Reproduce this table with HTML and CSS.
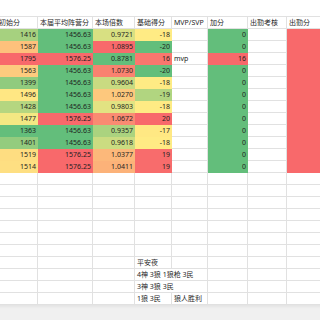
FILE: index.html
```html
<!DOCTYPE html>
<html lang="zh-CN">
<head>
<meta charset="utf-8">
<link rel="stylesheet" href="styles.css">
</head>
<body>
<div class="sheet">
  <div class="top"></div>
  <div class="row head">
    <div class="c">初始分</div><div class="c">本届平均阵营分</div><div class="c">本场倍数</div><div class="c">基础得分</div><div class="c">MVP/SVP</div><div class="c">加分</div><div class="c">出勤考核</div><div class="c">出勤分</div>
  </div>
  <div class="row">
    <div class="c f n" style="background:rgb(166,209,127)">1416</div><div class="c f n g">1456.63</div><div class="c f n" style="background:rgb(216,224,130)">0.9721</div><div class="c f n y">-18</div><div class="c"></div><div class="c f n g">0</div><div class="c"></div><div class="c f r"></div>
  </div>
  <div class="row">
    <div class="c f n" style="background:rgb(253,193,124)">1587</div><div class="c f n g">1456.63</div><div class="c f n r">1.0895</div><div class="c f n g">-20</div><div class="c"></div><div class="c f n g">0</div><div class="c"></div><div class="c f r"></div>
  </div>
  <div class="row">
    <div class="c f n r">1795</div><div class="c f n r">1576.25</div><div class="c f n g">0.8781</div><div class="c f n" style="background:rgb(249,119,110)">16</div><div class="c">mvp</div><div class="c f n r">16</div><div class="c"></div><div class="c f r"></div>
  </div>
  <div class="row">
    <div class="c f n" style="background:rgb(253,203,126)">1563</div><div class="c f n g">1456.63</div><div class="c f n" style="background:rgb(249,130,112)">1.0730</div><div class="c f n g">-20</div><div class="c"></div><div class="c f n g">0</div><div class="c"></div><div class="c f r"></div>
  </div>
  <div class="row">
    <div class="c f n" style="background:rgb(144,203,126)">1399</div><div class="c f n g">1456.63</div><div class="c f n" style="background:rgb(201,219,129)">0.9604</div><div class="c f n y">-18</div><div class="c"></div><div class="c f n g">0</div><div class="c"></div><div class="c f r"></div>
  </div>
  <div class="row">
    <div class="c f n" style="background:rgb(255,231,131)">1496</div><div class="c f n g">1456.63</div><div class="c f n" style="background:rgb(253,200,125)">1.0270</div><div class="c f n" style="background:rgb(177,213,128)">-19</div><div class="c"></div><div class="c f n g">0</div><div class="c"></div><div class="c f r"></div>
  </div>
  <div class="row">
    <div class="c f n" style="background:rgb(181,214,128)">1428</div><div class="c f n g">1456.63</div><div class="c f n" style="background:rgb(226,227,130)">0.9803</div><div class="c f n y">-18</div><div class="c"></div><div class="c f n g">0</div><div class="c"></div><div class="c f r"></div>
  </div>
  <div class="row">
    <div class="c f n" style="background:rgb(243,232,131)">1477</div><div class="c f n r">1576.25</div><div class="c f n" style="background:rgb(250,139,114)">1.0672</div><div class="c f n r">20</div><div class="c"></div><div class="c f n g">0</div><div class="c"></div><div class="c f r"></div>
  </div>
  <div class="row">
    <div class="c f n g">1363</div><div class="c f n g">1456.63</div><div class="c f n" style="background:rgb(171,211,127)">0.9357</div><div class="c f n" style="background:rgb(255,232,131)">-17</div><div class="c"></div><div class="c f n g">0</div><div class="c"></div><div class="c f r"></div>
  </div>
  <div class="row">
    <div class="c f n" style="background:rgb(147,204,126)">1401</div><div class="c f n g">1456.63</div><div class="c f n" style="background:rgb(203,220,129)">0.9618</div><div class="c f n y">-18</div><div class="c"></div><div class="c f n g">0</div><div class="c"></div><div class="c f r"></div>
  </div>
  <div class="row">
    <div class="c f n" style="background:rgb(254,221,129)">1519</div><div class="c f n r">1576.25</div><div class="c f n" style="background:rgb(252,184,122)">1.0377</div><div class="c f n" style="background:rgb(248,108,108)">19</div><div class="c"></div><div class="c f n g">0</div><div class="c"></div><div class="c f r"></div>
  </div>
  <div class="row">
    <div class="c f n" style="background:rgb(254,223,130)">1514</div><div class="c f n r">1576.25</div><div class="c f n" style="background:rgb(252,178,121)">1.0411</div><div class="c f n" style="background:rgb(248,108,108)">19</div><div class="c"></div><div class="c f n g">0</div><div class="c"></div><div class="c f r"></div>
  </div>
  <div class="row"><div class="c"></div><div class="c"></div><div class="c"></div><div class="c"></div><div class="c"></div><div class="c"></div><div class="c"></div><div class="c"></div></div>
  <div class="row"><div class="c"></div><div class="c"></div><div class="c"></div><div class="c"></div><div class="c"></div><div class="c"></div><div class="c"></div><div class="c"></div></div>
  <div class="row"><div class="c"></div><div class="c"></div><div class="c"></div><div class="c"></div><div class="c"></div><div class="c"></div><div class="c"></div><div class="c"></div></div>
  <div class="row"><div class="c"></div><div class="c"></div><div class="c"></div><div class="c"></div><div class="c"></div><div class="c"></div><div class="c"></div><div class="c"></div></div>
  <div class="row"><div class="c"></div><div class="c"></div><div class="c"></div><div class="c"></div><div class="c"></div><div class="c"></div><div class="c"></div><div class="c"></div></div>
  <div class="row"><div class="c"></div><div class="c"></div><div class="c"></div><div class="c"></div><div class="c"></div><div class="c"></div><div class="c"></div><div class="c"></div></div>
  <div class="row"><div class="c"></div><div class="c"></div><div class="c"></div><div class="c"></div><div class="c"></div><div class="c"></div><div class="c"></div><div class="c"></div></div>
  <div class="row"><div class="c"></div><div class="c"></div><div class="c"></div><div class="c">平安夜</div><div class="c"></div><div class="c"></div><div class="c"></div><div class="c"></div></div>
  <div class="row"><div class="c"></div><div class="c"></div><div class="c"></div><div class="c span2">4神 3狼 1狼枪 3民</div><div class="c"></div><div class="c"></div><div class="c"></div></div>
  <div class="row"><div class="c"></div><div class="c"></div><div class="c"></div><div class="c span2">3神 3狼 3民</div><div class="c"></div><div class="c"></div><div class="c"></div></div>
  <div class="row"><div class="c"></div><div class="c"></div><div class="c"></div><div class="c">1狼 3民</div><div class="c">狼人胜利</div><div class="c"></div><div class="c"></div><div class="c"></div></div>
  <div class="bottom"></div>
</div>
</body>
</html>
```

FILE: styles.css
```css
html, body {
  margin: 0;
  padding: 0;
  background: #fff;
  overflow: hidden;
}

.sheet {
  width: 330px;
  margin-left: -3px;
  font-family: "Noto Sans", "Noto Sans CJK SC", sans-serif;
  font-size: 7px;
  color: #1f1f1f;
}

.top {
  height: 17px;
  box-sizing: border-box;
  border-bottom: 1px solid #e1e1e1;
}

.row {
  display: grid;
  grid-template-columns: 41px 55px 42px 37px 36px 40px 39px 40px;
  height: 12px;
}

.c {
  box-sizing: border-box;
  height: 12px;
  border-right: 1px solid #e1e1e1;
  border-bottom: 1px solid #e1e1e1;
  padding: 0 2px;
  line-height: 11px;
  white-space: nowrap;
  overflow: hidden;
}

.f { border-color: transparent; }
.n { text-align: right; padding-right: 1px; }
.g { background: #63be7b; }
.y { background: #ffeb84; }
.r { background: #f8696b; }
.span2 { grid-column: span 2; }

.bottom {
  height: 15px;
  background: #f0f0f0;
  box-shadow: inset 0 2px 3px rgba(0, 0, 0, 0.05);
}
```
